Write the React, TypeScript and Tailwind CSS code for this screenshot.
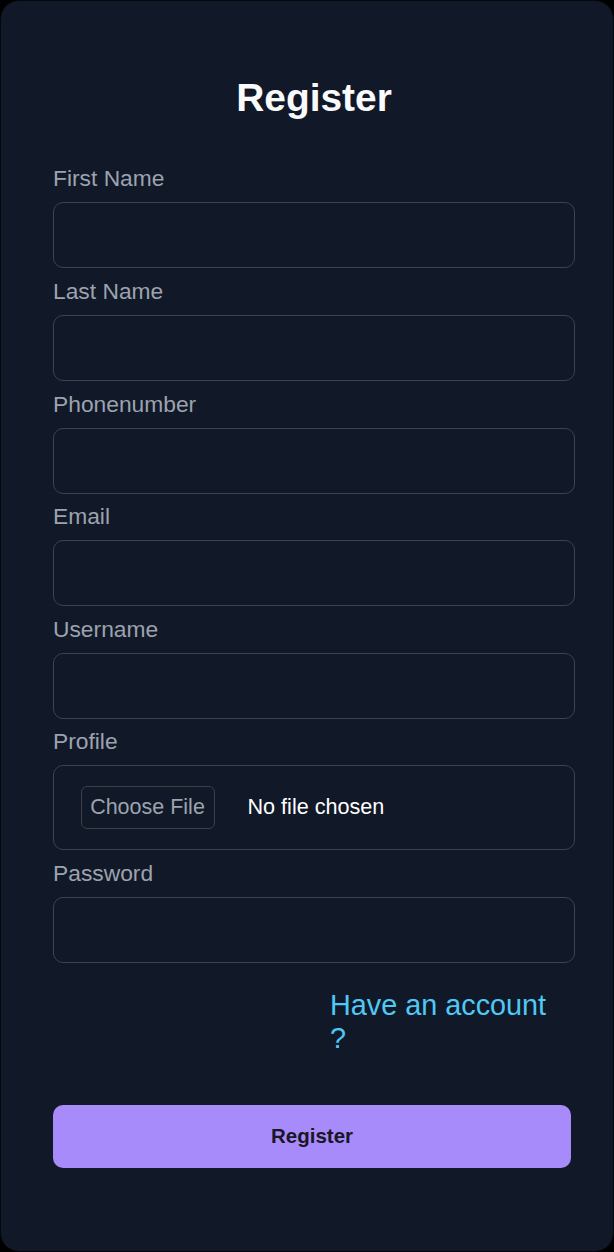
import React from "react";

const font = { fontFamily: '"Liberation Sans", Arial, sans-serif' };

function Field({ label, first }: { label: string; first?: boolean }) {
  return (
    <div className={first ? "" : "mt-[6.75px]"}>
      <label className="block text-[22.8px] leading-[32px] text-[#9ca3af]">{label}</label>
      <div className="mt-[8px] h-[66px] w-[522px] rounded-[10px] border-[1.6px] border-[#3a4453] bg-[#111827]" />
    </div>
  );
}

export default function App() {
  return (
    <div className="min-h-screen bg-black" style={font}>
      <div className="h-[1252px] w-[614px] rounded-[19px] border border-[#05070c] bg-[#111827] pl-[52px] pt-[75px]">
        <h1 className="w-[522px] text-center text-[38.9px] font-bold leading-[44px] text-[#f9fafb]">Register</h1>
        <div className="mt-[42px]">
          <Field label="First Name" first />
          <Field label="Last Name" />
          <Field label="Phonenumber" />
          <Field label="Email" />
          <Field label="Username" />
          <div className="mt-[6px]">
            <label className="block text-[22.8px] leading-[32px] text-[#9ca3af]">Profile</label>
            <div className="mt-[8px] flex h-[85px] w-[522px] items-center rounded-[10px] border-[1.6px] border-[#3a4453] bg-[#111827] pl-[26.5px]">
              <span className="flex h-[43px] w-[134px] items-center justify-center rounded-[6px] border-[1.5px] border-[#3f3f46] text-[21.5px] text-[#9ca3af]">
                Choose File
              </span>
              <span className="ml-[33px] text-[21.6px] text-white">No file chosen</span>
            </div>
          </div>
          <Field label="Password" />
        </div>
        <div className="ml-[277px] mt-[26px] w-[225px] text-[28.8px] leading-[33px] text-[#4fc8f5]">
          Have an account ?
        </div>
        <button className="mt-[50px] flex h-[63px] w-[518px] items-center justify-center rounded-[10px] bg-[#a78bfa] text-[20.5px] font-bold text-[#1a1625]">
          Register
        </button>
      </div>
    </div>
  );
}
